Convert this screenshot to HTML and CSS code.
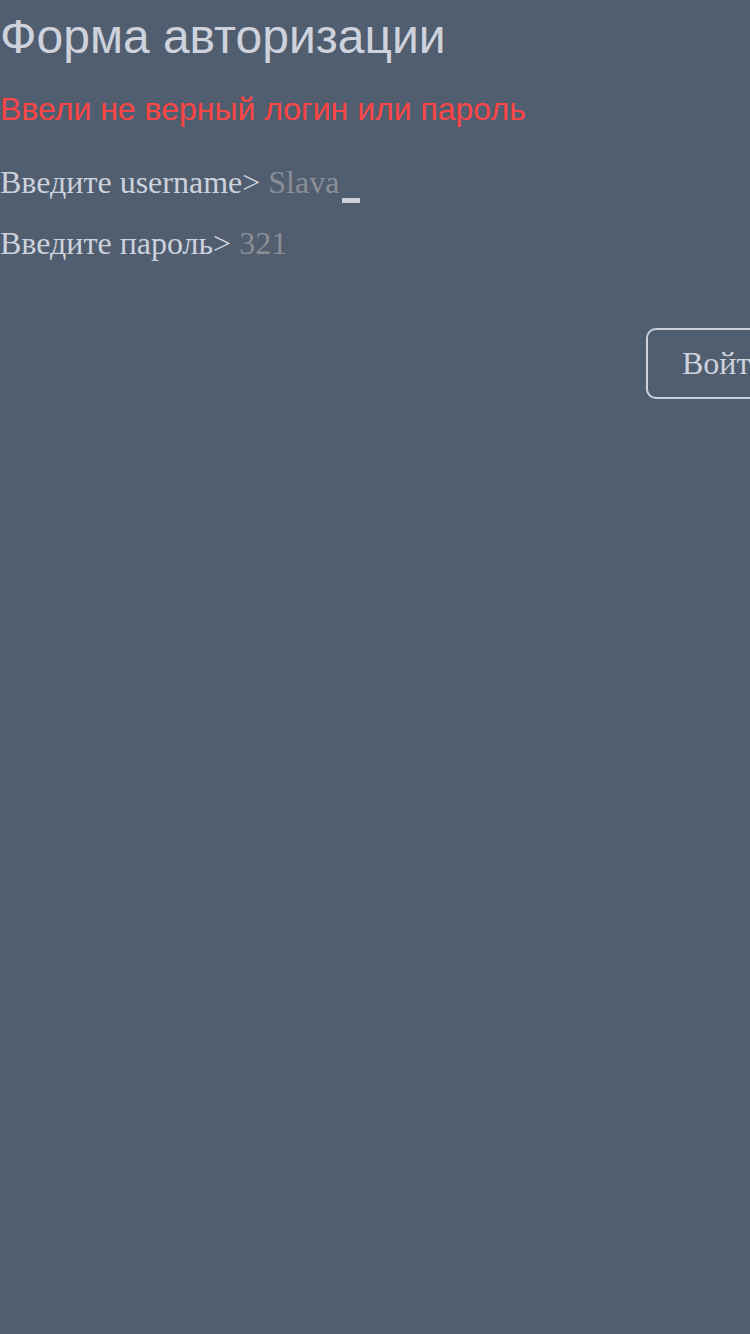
FILE: index.html
```html
<!DOCTYPE html>
<html lang="ru">
<head>
<meta charset="utf-8">
<link rel="stylesheet" href="styles.css">
</head>
<body>
<div class="page">
  <h1 class="title">Форма авторизации</h1>
  <p class="error">Ввели не верный логин или пароль</p>
  <div class="row"><span class="label">Введите username&gt; </span><span class="value">Slava</span><span class="cursor"></span></div>
  <div class="row"><span class="label">Введите пароль&gt; </span><span class="value">321</span></div>
  <div class="actions"><button class="btn">Войти</button></div>
</div>
</body>
</html>
```
FILE: styles.css
```css
html, body {
  margin: 0;
  padding: 0;
  background: #505e70;
  overflow: hidden;
  height: 100%;
}
.page {
  width: 750px;
  height: 1334px;
  overflow: hidden;
}
.title {
  margin: 0;
  padding-top: 9px;
  font-family: "Liberation Sans", Arial, sans-serif;
  font-weight: normal;
  font-size: 48px;
  line-height: 56px;
  color: #cdd2dc;
  white-space: nowrap;
}
.error {
  margin: 24px 0 0;
  font-family: "Liberation Sans", Arial, sans-serif;
  font-size: 32px;
  line-height: 40px;
  color: #ff4545;
  white-space: nowrap;
}
.row {
  font-family: "Liberation Serif", "Times New Roman", serif;
  font-size: 32px;
  line-height: 40px;
  color: #cdd2dc;
  white-space: nowrap;
  margin-top: 33px;
}
.row + .row {
  margin-top: 20px;
}
.value {
  color: #8a8e95;
}
.cursor {
  display: inline-block;
  width: 18px;
  height: 5px;
  background: #cdd2dc;
  margin-left: 3px;
  vertical-align: -10px;
}
.actions {
  display: flex;
  margin-top: 65px;
  padding-left: 646px;
  white-space: nowrap;
}
.btn {
  flex: none;
  font-family: "Liberation Serif", "Times New Roman", serif;
  font-size: 32px;
  color: #cdd2dc;
  background: transparent;
  border: 2px solid #cdd2dc;
  border-radius: 10px;
  height: 71px;
  padding: 0 34px;
  box-sizing: border-box;
}
```
